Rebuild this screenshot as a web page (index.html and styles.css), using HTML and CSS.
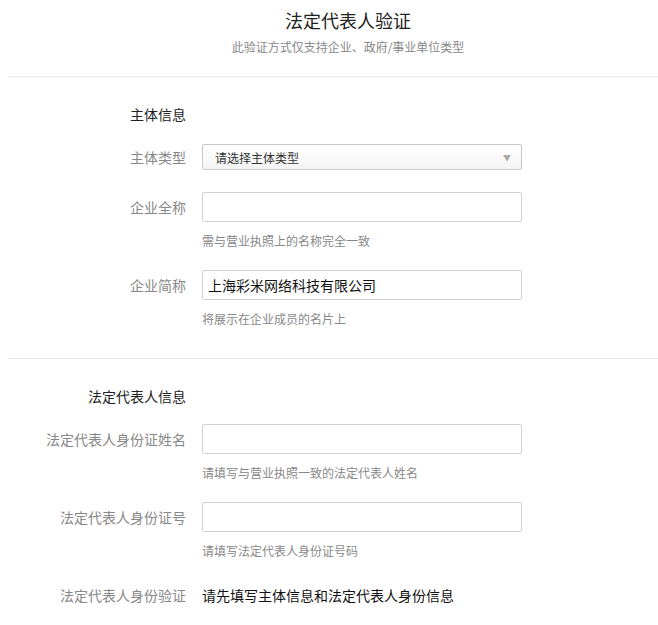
FILE: index.html
```html
<!DOCTYPE html>
<html lang="zh-CN">

<head>
    <meta charset="UTF-8">
    <meta name="viewport" content="width=device-width, initial-scale=1.0">
    <title>法定代表人验证</title>
    <link rel="stylesheet" href="styles.css">
</head>

<body>
    <div class="page">
        <div class="header">
            <h2>法定代表人验证</h2>
            <p>此验证方式仅支持企业、政府/事业单位类型</p>
        </div>

        <!-- 主体信息 -->
        <div class="section">
            <div class="row">
                <div class="label title">主体信息</div>
            </div>
            <div class="row">
                <div class="label">主体类型</div>
                <div class="select">
                    <span>请选择主体类型</span>
                    <i>▼</i>
                </div>
            </div>
            <div class="row">
                <div class="label">企业全称</div>
                <input type="text">
            </div>
            <div class="tip">需与营业执照上的名称完全一致</div>
            <div class="row">
                <div class="label">企业简称</div>
                <input type="text" value="上海彩米网络科技有限公司">
            </div>
            <div class="tip">将展示在企业成员的名片上</div>
        </div>

        <!-- 法定代表人信息 -->
        <div class="section">
            <div class="row">
                <div class="label title">法定代表人信息</div>
            </div>
            <div class="row">
                <div class="label">法定代表人身份证姓名</div>
                <input type="text">
            </div>
            <div class="tip">请填写与营业执照一致的法定代表人姓名</div>
            <div class="row">
                <div class="label">法定代表人身份证号</div>
                <input type="text">
            </div>
            <div class="tip">请填写法定代表人身份证号码</div>
            <div class="row">
                <div class="label">法定代表人身份验证</div>
                <div class="value">请先填写主体信息和法定代表人身份信息</div>
            </div>
        </div>
    </div>
</body>

</html>
```

FILE: styles.css
```css
* {
    padding: 0;
    margin: 0;
    box-sizing: border-box;
}

body {
    font-family: "Noto Sans CJK SC", "Liberation Sans", sans-serif;
    color: #333;
    overflow: hidden;
}

.page {
    width: 680px;
    margin-left: 8px;
}

.header {
    text-align: center;
    padding-top: 8px;
    padding-bottom: 20px;
    border-bottom: 1px solid #e6e6e6;
}

.header h2 {
    font-size: 18px;
    line-height: 24px;
    font-weight: normal;
    color: #222;
}

.header p {
    margin-top: 6px;
    font-size: 12px;
    line-height: 18px;
    color: #888;
}

.section {
    padding-top: 22px;
    padding-bottom: 30px;
    border-bottom: 1px solid #e6e6e6;
}

.section:last-child {
    border-bottom: none;
}

.row {
    display: grid;
    grid-template-columns: 178px 320px;
    column-gap: 16px;
    align-items: center;
    min-height: 30px;
    margin-top: 20px;
}

.row:first-child {
    margin-top: 0;
    margin-bottom: -7px;
}

.label {
    text-align: right;
    font-size: 14px;
    line-height: 20px;
    color: #888;
}

.label.title {
    color: #222;
}

.select {
    height: 26px;
    border: 1px solid #c8c8c8;
    border-radius: 2px;
    background: linear-gradient(#fff, #f3f3f3);
    display: flex;
    align-items: center;
    justify-content: space-between;
    padding: 0 10px 0 12px;
    font-size: 12px;
    color: #333;
}

.select i {
    font-style: normal;
    font-size: 8px;
    color: #aaa;
}

input {
    height: 30px;
    width: 320px;
    border: 1px solid #d2d2d2;
    border-radius: 2px;
    padding: 0 5px;
    font-family: inherit;
    font-size: 14px;
    color: #111;
    outline: none;
}

.tip {
    margin-top: 10px;
    padding-left: 194px;
    font-size: 12px;
    line-height: 18px;
    color: #888;
}

.value {
    font-size: 14px;
    line-height: 20px;
    color: #111;
}
```
